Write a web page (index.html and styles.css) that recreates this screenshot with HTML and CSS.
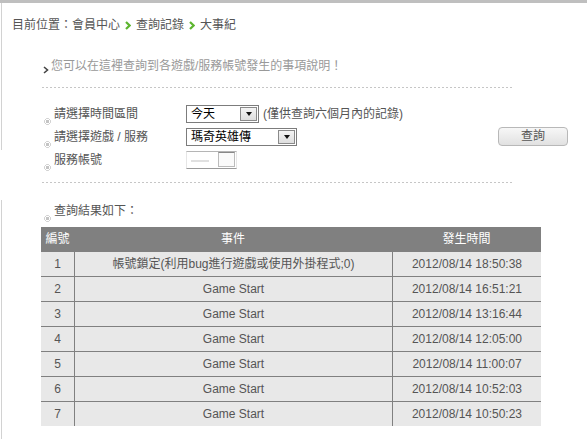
FILE: index.html
```html
<!DOCTYPE html>
<html lang="zh-Hant">
<head>
<meta charset="utf-8">
<title>大事紀</title>
<link rel="stylesheet" href="styles.css">
</head>
<body>
<div class="topbar"></div>
<div class="page">
  <div class="crumb">
    <span>目前位置：會員中心</span>
    <svg class="arr" viewBox="0 0 6 9"><path d="M1 1L4.6 4.5L1 8" fill="none" stroke="#5db52f" stroke-width="2.2"/></svg>
    <span>查詢記錄</span>
    <svg class="arr" viewBox="0 0 6 9"><path d="M1 1L4.6 4.5L1 8" fill="none" stroke="#5db52f" stroke-width="2.2"/></svg>
    <span>大事紀</span>
  </div>
  <div class="content">
    <p class="intro"><svg class="chev" viewBox="0 0 6 8"><path d="M1 1L4.5 4L1 7" fill="none" stroke="#444" stroke-width="1.6"/></svg>您可以在這裡查詢到各遊戲/服務帳號發生的事項說明！</p>
    <div class="rule"></div>
    <form class="query">
      <span class="label r1"><i class="dot"></i>請選擇時間區間</span>
      <span class="ctrl r1">
        <span class="sel w1"><span class="val">今天</span><span class="btn"></span></span>
        <span class="note">(僅供查詢六個月內的記錄)</span>
      </span>
      <span class="label r2"><i class="dot"></i>請選擇遊戲 / 服務</span>
      <span class="ctrl r2">
        <span class="sel w2"><span class="val">瑪奇英雄傳</span><span class="btn"></span></span>
      </span>
      <button type="button" class="go">查詢</button>
      <span class="label r3"><i class="dot"></i>服務帳號</span>
      <span class="ctrl r3">
        <span class="sel w3 ghost"><span class="val"><i class="ghostbar"></i></span><span class="gbtn"></span></span>
      </span>
    </form>
    <div class="rule rule2"></div>
    <div class="result-label"><i class="dot"></i>查詢結果如下：</div>
    <table class="events">
      <colgroup><col class="c1"><col class="c2"><col class="c3"></colgroup>
      <thead>
        <tr><th>編號</th><th>事件</th><th>發生時間</th></tr>
      </thead>
      <tbody>
        <tr><td>1</td><td>帳號鎖定(利用bug進行遊戲或使用外掛程式;0)</td><td>2012/08/14 18:50:38</td></tr>
        <tr><td>2</td><td>Game Start</td><td>2012/08/14 16:51:21</td></tr>
        <tr><td>3</td><td>Game Start</td><td>2012/08/14 13:16:44</td></tr>
        <tr><td>4</td><td>Game Start</td><td>2012/08/14 12:05:00</td></tr>
        <tr><td>5</td><td>Game Start</td><td>2012/08/14 11:00:07</td></tr>
        <tr><td>6</td><td>Game Start</td><td>2012/08/14 10:52:03</td></tr>
        <tr><td>7</td><td>Game Start</td><td>2012/08/14 10:50:23</td></tr>
      </tbody>
    </table>
  </div>
</div>
</body>
</html>
```
FILE: styles.css
```css
* { box-sizing: border-box; }
html, body { margin: 0; padding: 0; }
body {
  font: 12px/16px "Liberation Sans", "Noto Sans CJK TC", sans-serif;
  color: #555;
  background: #fff;
  width: 587px;
  height: 439px;
  overflow: hidden;
}
.topbar { height: 3px; background: #bfbfbf; }
.page {
  height: 436px;
  background:
    linear-gradient(#d2d2d2, #d2d2d2) 1px 0 / 1px 147px no-repeat,
    linear-gradient(#d2d2d2, #d2d2d2) 1px 197px / 1px 260px no-repeat;
}
.crumb {
  display: flex;
  align-items: center;
  padding: 14px 0 0 12px;
  line-height: 16px;
  color: #555;
}
.arr { width: 6px; height: 9px; margin: 1px 5px 0 5px; }
.content { padding-left: 42px; }
.intro {
  margin: 25px 0 0;
  display: flex;
  align-items: center;
  color: #999;
  line-height: 16px;
}
.chev { width: 6px; height: 8px; margin: 8px 2px 0 1px; }
.rule {
  width: 471px;
  height: 1px;
  margin-top: 13px;
  background: repeating-linear-gradient(90deg, #c6c6c6 0 2px, transparent 2px 4px);
}
.query {
  display: grid;
  grid-template-columns: 144px 1fr 70px;
  grid-template-rows: 18px 18px 18px;
  row-gap: 5px;
  width: 526px;
  margin: 17px 0 0;
}
.r1 { grid-row: 1; }
.r2 { grid-row: 2; }
.r3 { grid-row: 3; }
.label { grid-column: 1; display: flex; align-items: center; color: #555; }
.dot {
  display: inline-block;
  flex: none;
  width: 7px;
  height: 7px;
  border-radius: 50%;
  margin: 12px 3px -3px 2px;
  background: radial-gradient(circle, #c4c4c4 0 1.6px, #fff 2px 2.4px, #d0d0d0 2.8px 3.5px, transparent 3.6px);
}
.ctrl { grid-column: 2; display: flex; align-items: center; }
.sel {
  display: flex;
  height: 18px;
  border: 1px solid #7c7c7c;
  background: #fff;
}
.w1 { width: 73px; }
.w2 { width: 111px; }
.w3 { width: 51px; }
.val { flex: 1; padding-left: 4px; color: #000; line-height: 16px; }
.btn {
  width: 17px;
  height: 14px;
  margin: 1px;
  border: 1px solid #8a8a8a;
  background: linear-gradient(#f4f4f4, #dedede);
  display: flex;
  align-items: center;
  justify-content: center;
}
.btn::after {
  content: "";
  border-left: 3.5px solid transparent;
  border-right: 3.5px solid transparent;
  border-top: 4px solid #111;
}
.note { margin-left: 4px; color: #555; }
.ghost { border-color: #b5b5b5 #e6e6e6 #9a9a9a #e6e6e6; }
.ghost .val { padding: 8px 0 0 4px; }
.ghostbar { display: block; width: 18px; height: 2px; background: #e0e0e0; }
.gbtn { width: 17px; border: 1px solid #bbb; border-top-color: #888; background: #fafafa; margin: 0 1px 1px 0; }
.go {
  grid-column: 3;
  grid-row: 2;
  width: 70px;
  height: 19px;
  margin-top: -1px;
  padding: 0;
  border: 1px solid #b8b8b8;
  border-radius: 4px;
  background: linear-gradient(#f7f7f7, #e1e1e1);
  font: 12px/17px "Liberation Sans", "Noto Sans CJK TC", sans-serif;
  color: #555;
}
.rule2 { margin-top: 13px; }
.result-label {
  display: flex;
  align-items: center;
  margin-top: 20px;
  line-height: 16px;
}
.events {
  margin: 8px 0 0 -1px;
  width: 500px;
  table-layout: fixed;
  border-collapse: separate;
  border-spacing: 0;
}
.c1 { width: 33px; }
.c2 { width: 318px; }
.c3 { width: 149px; }
.events th {
  background: #808080;
  color: #fff;
  font-weight: normal;
  line-height: 24px;
  padding: 0;
  text-align: center;
}
.events td {
  background: #e8e8e8;
  color: #555;
  line-height: 24px;
  padding: 0;
  text-align: center;
  border-top: 1px solid #808080;
  white-space: nowrap;
}
.events td + td { border-left: 1px solid #808080; }
```
